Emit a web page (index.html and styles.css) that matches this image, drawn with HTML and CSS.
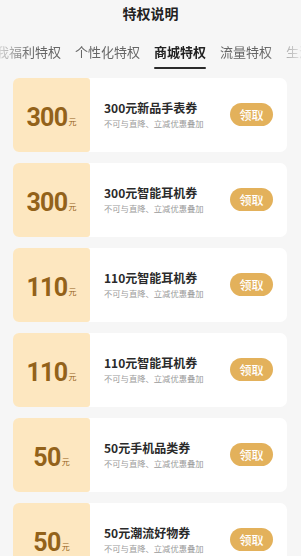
FILE: index.html
```html
<!DOCTYPE html>
<html lang="zh-CN">
<head>
  <meta charset="UTF-8">
  <meta name="viewport" content="width=device-width, initial-scale=1.0">
  <title>特权说明</title>
  <link rel="stylesheet" href="styles.css">
</head>
<body>
  <div class="page">
    <div class="header">特权说明</div>

    <!-- Tabs -->
    <div class="tabs">
      <div class="tab-list">
        <span class="tab">我福利特权</span>
        <span class="tab">个性化特权</span>
        <span class="tab active">商城特权</span>
        <span class="tab">流量特权</span>
        <span class="tab">生活特权</span>
      </div>
    </div>

    <!-- Coupons -->
    <div class="coupon-list">
      <div class="coupon">
        <div class="coupon-value"><span class="num">300</span><span class="unit">元</span></div>
        <div class="coupon-info">
          <h3>300元新品手表券</h3>
          <p>不可与直降、立减优惠叠加</p>
        </div>
        <button class="get-btn">领取</button>
      </div>
      <div class="coupon">
        <div class="coupon-value"><span class="num">300</span><span class="unit">元</span></div>
        <div class="coupon-info">
          <h3>300元智能耳机券</h3>
          <p>不可与直降、立减优惠叠加</p>
        </div>
        <button class="get-btn">领取</button>
      </div>
      <div class="coupon">
        <div class="coupon-value"><span class="num">110</span><span class="unit">元</span></div>
        <div class="coupon-info">
          <h3>110元智能耳机券</h3>
          <p>不可与直降、立减优惠叠加</p>
        </div>
        <button class="get-btn">领取</button>
      </div>
      <div class="coupon">
        <div class="coupon-value"><span class="num">110</span><span class="unit">元</span></div>
        <div class="coupon-info">
          <h3>110元智能耳机券</h3>
          <p>不可与直降、立减优惠叠加</p>
        </div>
        <button class="get-btn">领取</button>
      </div>
      <div class="coupon">
        <div class="coupon-value"><span class="num">50</span><span class="unit">元</span></div>
        <div class="coupon-info">
          <h3>50元手机品类券</h3>
          <p>不可与直降、立减优惠叠加</p>
        </div>
        <button class="get-btn">领取</button>
      </div>
      <div class="coupon">
        <div class="coupon-value"><span class="num">50</span><span class="unit">元</span></div>
        <div class="coupon-info">
          <h3>50元潮流好物券</h3>
          <p>不可与直降、立减优惠叠加</p>
        </div>
        <button class="get-btn">领取</button>
      </div>
    </div>
  </div>
</body>
</html>
```

FILE: styles.css
```css
/* Base styles */
html, body {
  height: 100%;
}

body {
  margin: 0;
  background: #f6f6f6;
  font-family: "Noto Sans CJK SC", "Noto Sans", sans-serif;
  color: #222;
  overflow: hidden;
}

/* Header */
.header {
  height: 26px;
  padding-top: 1px;
  line-height: 24px;
  text-align: center;
  font-size: 14px;
  font-weight: 700;
  color: #222;
}

/* Tabs - scrolled list, faded at both ends */
.tabs {
  overflow: hidden;
  height: 51px;
  -webkit-mask-image: linear-gradient(to right, rgba(0,0,0,0.25) 0, #000 30px, #000 265px, rgba(0,0,0,0.15) 301px);
  mask-image: linear-gradient(to right, rgba(0,0,0,0.25) 0, #000 30px, #000 265px, rgba(0,0,0,0.15) 301px);
}

.tab-list {
  display: flex;
  gap: 14px;
  margin-left: -4px;
  white-space: nowrap;
  padding-top: 16px;
}

.tab {
  position: relative;
  font-size: 13px;
  line-height: 18px;
  color: #666;
  padding-bottom: 8px;
}

.tab.active {
  color: #222;
  font-weight: 700;
}

.tab.active::after {
  content: "";
  position: absolute;
  left: 0;
  right: 0;
  bottom: 0;
  height: 2px;
  border-radius: 1px;
  background: #2a2a2a;
}

/* Coupon list */
.coupon-list {
  display: flex;
  flex-direction: column;
  gap: 11px;
  padding: 0 14px 0 13px;
}

.coupon {
  display: flex;
  align-items: center;
  height: 74px;
  background: #fff;
  border-radius: 7px;
  flex-shrink: 0;
}

.coupon-value {
  position: relative;
  width: 77px;
  height: 100%;
  display: flex;
  align-items: center;
  justify-content: center;
  padding-top: 4px;
  box-sizing: border-box;
  background: #fde7c0;
  border-radius: 6px 3px 3px 6px;
  color: #93621a;
}

/* serrated edge */
.coupon-value::after {
  content: "";
  position: absolute;
  top: 3px;
  bottom: 3px;
  right: -1px;
  width: 2px;
  background: radial-gradient(circle at 2px 2px, #fff 1px, transparent 1.2px) 0 0 / 2px 4px repeat-y;
}

.num {
  font-family: Roboto, "Noto Sans", sans-serif;
  font-size: 25px;
  font-weight: 700;
  letter-spacing: -0.6px;
}

.unit {
  font-size: 8px;
  margin-top: 9px;
  margin-left: 1px;
}

.coupon-info {
  flex: 1;
  min-width: 0;
  padding-left: 14px;
  padding-bottom: 2px;
}

.coupon-info h3 {
  margin: 0;
  font-size: 12px;
  line-height: 16px;
  font-weight: 700;
  color: #2a2a2a;
}

.coupon-info p {
  margin: 1px 0 0;
  font-size: 8.3px;
  line-height: 12px;
  color: #9a9a9a;
}

.get-btn {
  width: 43px;
  height: 23px;
  margin-right: 14px;
  margin-bottom: 1px;
  padding: 0;
  border: none;
  border-radius: 12px;
  background: #e3b15b;
  color: #fff;
  font-family: inherit;
  font-size: 12px;
  font-weight: 500;
  line-height: 23px;
}
```
